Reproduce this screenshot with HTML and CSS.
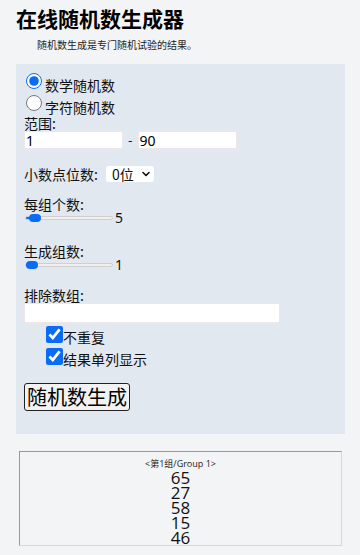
FILE: index.html
```html
<!DOCTYPE html>
<html lang="zh">
<head>
<meta charset="utf-8">
<link rel="stylesheet" href="styles.css">
</head>
<body>
<h1 class="title">在线随机数生成器</h1>
<p class="intro">随机数生成是专门随机试验的结果。</p>
<div class="panel">
  <label class="radio-row"><input type="radio" name="t" class="radio" checked><span class="opt">数学随机数</span></label>
  <label class="radio-row"><input type="radio" name="t" class="radio"><span class="opt">字符随机数</span></label>
  <div class="label">范围:</div>
  <div class="range-row">
    <input type="text" class="txt short" value="1">
    <span class="dash">-</span>
    <input type="text" class="txt short" value="90">
  </div>
  <div class="select-row">
    <span>小数点位数:</span>
    <span class="sel-wrap">
      <select class="sel"><option>0位</option></select>
      <svg class="chev" width="8" height="6" viewBox="0 0 8 6"><path d="M1 1.5 L4 4.5 L7 1.5" fill="none" stroke="#111" stroke-width="1.6" stroke-linecap="round" stroke-linejoin="round"/></svg>
    </span>
  </div>
  <div class="label first">每组个数:</div>
  <div class="slider-row"><input type="range" class="slider" min="1" max="100" value="5"><span class="val">5</span></div>
  <div class="label gap2">生成组数:</div>
  <div class="slider-row"><input type="range" class="slider" min="1" max="100" value="1"><span class="val">1</span></div>
  <div class="label gap3">排除数组:</div>
  <input type="text" class="txt long">
  <label class="check-row"><input type="checkbox" class="check" checked><span class="opt2">不重复</span></label>
  <label class="check-row"><input type="checkbox" class="check" checked><span class="opt2">结果单列显示</span></label>
  <button class="btn">随机数生成</button>
</div>
<div class="result">
  <div class="group">&lt;第1组/Group 1&gt;</div>
  <div class="num">65</div>
  <div class="num">27</div>
  <div class="num">58</div>
  <div class="num">15</div>
  <div class="num">46</div>
</div>
</body>
</html>
```
FILE: styles.css
```css
html, body {
  margin: 0;
  padding: 0;
  background: #f3f4f6;
}
body {
  padding: 0 15px 0 16px;
  font-family: "Noto Sans CJK SC", "Noto Sans", sans-serif;
  color: #111;
  font-size: 14px;
}
.title {
  margin: 0;
  padding-top: 4px;
  font-size: 21px;
  line-height: 28px;
  font-weight: 700;
  color: #000;
}
.intro {
  margin: 6px 0 0 21px;
  font-size: 10px;
  line-height: 14px;
  color: #222;
}
.panel {
  margin-top: 12px;
  background: #e2e8f0;
  padding: 8px 8px 23px 8px;
  display: flex;
  flex-direction: column;
  align-items: flex-start;
}
.radio-row {
  display: flex;
  align-items: flex-start;
  height: 22px;
}
.radio {
  width: 16px;
  height: 16px;
  margin: 1px 3px 0 2px;
  accent-color: #0a6cf5;
}
.opt {
  line-height: 14px;
  margin-top: 6px;
}
.label {
  line-height: 15px;
  height: 15px;
}
.label.first { margin-top: 15px; }
.label.gap2 { margin-top: 20px; }
.label.gap3 { margin-top: 17px; }
.range-row {
  display: flex;
  align-items: center;
  gap: 5px;
}
.txt {
  border: 1px solid #efe6ea;
  background: #fff;
  font-family: "Noto Sans", sans-serif;
  font-size: 14px;
  height: 18px;
  box-sizing: border-box;
  padding: 0 1px;
  margin: 0;
  color: #000;
  outline: none;
}
.short {
  width: 99px;
}
.long {
  width: 256px;
  height: 20px;
}
.dash {
  font-size: 13px;
  line-height: 18px;
}
.select-row {
  margin-top: 17px;
  display: flex;
  align-items: center;
  gap: 8px;
  height: 16px;
  line-height: 16px;
}
.sel-wrap {
  position: relative;
  display: inline-flex;
}
.sel {
  appearance: none;
  -webkit-appearance: none;
  height: 16px;
  width: 48px;
  border: none;
  background: #fff;
  font-family: "Noto Sans CJK SC", sans-serif;
  font-size: 14px;
  line-height: 16px;
  padding: 0 0 0 6px;
  border-radius: 3px;
  color: #111;
}
.chev {
  position: absolute;
  right: 4px;
  top: 5px;
  pointer-events: none;
}
.slider-row {
  display: flex;
  align-items: center;
  height: 12px;
}
.slider {
  -webkit-appearance: none;
  appearance: none;
  width: 88px;
  height: 8px;
  margin: 0 2px 0 1px;
  padding: 0;
  background: transparent;
}
.slider::-webkit-slider-runnable-track {
  height: 4px;
  background: linear-gradient(to right, #0a6cf5 0 6px, #efefef 6px);
  border: 1px solid #cfcfcf;
  border-radius: 3px;
}
.slider::-webkit-slider-thumb {
  -webkit-appearance: none;
  width: 12px;
  height: 8px;
  border-radius: 4px;
  background: #0a6cf5;
  margin-top: -3px;
  border: none;
}
.val {
  font-family: "Noto Sans", sans-serif;
  font-size: 14px;
  line-height: 12px;
}
.check-row {
  display: flex;
  align-items: flex-start;
  margin-left: 22px;
  height: 22px;
}
.check {
  width: 17px;
  height: 17px;
  margin: 3px 0 0 0;
  accent-color: #0a6cf5;
}
.opt2 {
  line-height: 14px;
  margin-top: 7px;
}
.btn {
  margin-top: 16px;
  font-family: "Noto Sans CJK SC", sans-serif;
  font-size: 20px;
  line-height: 24px;
  height: 28px;
  padding: 0 2px;
  border: 1px solid #222;
  border-radius: 3px;
  background: #f2f2f2;
  color: #000;
}
.result {
  margin: 17px 3px 0 3px;
  height: 93px;
  overflow: hidden;
  border-style: solid;
  border-width: 1px;
  border-color: #8f9aa8 #c7dcec #c7dcec #8f9aa8;
  text-align: center;
  font-family: "Open Sans", "Noto Sans CJK SC", sans-serif;
}
.group {
  margin-top: 6px;
  font-size: 9px;
  line-height: 12px;
  color: #222;
}
.num {
  font-size: 17px;
  line-height: 15px;
  color: #111;
}
```
